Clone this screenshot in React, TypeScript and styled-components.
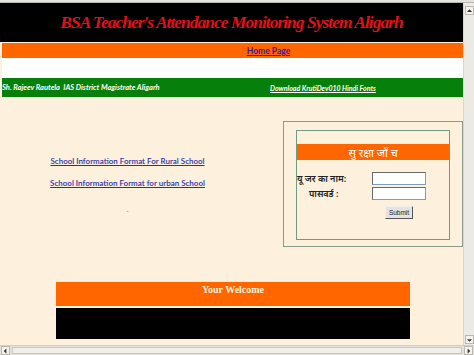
import styled, { createGlobalStyle } from "styled-components";

const GlobalStyle = createGlobalStyle`
  html, body {
    margin: 0;
    padding: 0;
    width: 474px;
    height: 355px;
    overflow: hidden;
    background: #fdf0dc;
  }
`;

const Window = styled.div`
  display: grid;
  grid-template-columns: 463px 11px;
  grid-template-rows: 3px 342px 10px;
  width: 474px;
  height: 355px;
`;

const TopStrip = styled.div`
  grid-column: 1 / 3;
  background: #e4e2dc;
  border-bottom: 1px solid #b8b6b0;
`;

const Page = styled.div`
  background: #fdf0dc;
  overflow: hidden;
  display: flex;
  flex-direction: column;
`;

const Banner = styled.div`
  height: 39px;
  background: #000;
  display: flex;
  align-items: center;
  justify-content: center;
`;

const Title = styled.h1`
  margin: 0;
  font-family: "Liberation Serif", "Times New Roman", serif;
  font-style: italic;
  font-weight: bold;
  font-size: 17.5px;
  color: #e0111b;
  letter-spacing: -1px;
`;

const NavBar = styled.div`
  margin: 1px 0 0 2px;
  height: 15px;
  background: #ff6600;
  display: flex;
  align-items: center;
  justify-content: center;
  padding-left: 72px;
`;

const NavLink = styled.a`
  font-family: Lato, "Liberation Sans", sans-serif;
  font-weight: bold;
  font-size: 8.5px;
  color: #4a10a8;
  text-decoration: underline;
`;

const WhiteGap = styled.div`
  margin-left: 2px;
  height: 20px;
  background: #fff;
`;

const GreenBar = styled.div`
  margin-left: 2px;
  height: 19px;
  background: #06800a;
  display: flex;
  align-items: center;
`;

const GreenText = styled.span<{ $width: number }>`
  width: ${p => p.$width}px;
  font-family: Lato, "Liberation Sans", sans-serif;
  font-style: italic;
  font-weight: bold;
  font-size: 7.5px;
  color: #fff;
  white-space: pre;
`;

const GreenLink = styled.a`
  font-family: Lato, "Liberation Sans", sans-serif;
  font-style: italic;
  font-weight: bold;
  font-size: 7px;
  color: #fff;
  text-decoration: underline;
`;

const Middle = styled.div`
  display: flex;
  padding-top: 24px;
`;

const LinkColumn = styled.div`
  width: 255px;
  display: flex;
  flex-direction: column;
  align-items: center;
  padding-top: 35px;
  gap: 12px;
`;

const InfoLink = styled.a`
  font-family: Lato, "Liberation Sans", sans-serif;
  font-size: 8px;
  font-weight: 600;
  color: #2e2ea8;
  text-decoration: underline;
`;

const Dash = styled.span`
  font-family: "Liberation Sans", sans-serif;
  font-size: 6px;
  color: #555;
  margin-top: 8px;
`;

const LoginOuter = styled.div`
  margin-left: 28px;
  width: 180px;
  height: 126px;
  border: 1px solid #8a9a88;
  box-sizing: border-box;
  padding: 8px 12px 0 12px;
`;

const LoginInner = styled.div`
  height: 110px;
  border: 1px solid #6f9a86;
  box-sizing: border-box;
  padding-top: 13px;
  display: flex;
  flex-direction: column;
`;

const LoginHead = styled.div`
  height: 16px;
  background: #ff6600;
  color: #fff;
  font-family: "Noto Sans", "DejaVu Sans", sans-serif;
  font-size: 11px;
  display: flex;
  align-items: center;
  justify-content: center;
  white-space: pre;
`;

const FieldGrid = styled.div`
  display: grid;
  grid-template-columns: 75px 54px;
  row-gap: 2px;
  margin-top: 12px;
  align-items: center;
`;

const Label = styled.span<{ $indent?: number }>`
  font-family: "Noto Sans", "DejaVu Sans", sans-serif;
  font-size: 9px;
  font-weight: 600;
  color: #222;
  padding-left: ${p => p.$indent ?? 0}px;
  white-space: pre;
`;

const Input = styled.input`
  width: 54px;
  height: 13px;
  box-sizing: border-box;
  border: 1px solid #7f9db9;
  border-top-color: #6a6a6a;
  border-left-color: #6a6a6a;
  background: #fff;
  padding: 0;
`;

const SubmitButton = styled.button`
  grid-column: 2;
  justify-self: start;
  margin: 4px 0 0 13px;
  width: 28px;
  height: 13px;
  padding: 0;
  font-family: "Liberation Sans", sans-serif;
  font-size: 6.5px;
  color: #222;
  background: #e6e3dc;
  border: 1px solid #555;
  border-top-color: #eee;
  border-left-color: #eee;
`;

const Welcome = styled.div`
  margin: 35px 0 0 56px;
  width: 354px;
`;

const WelcomeHead = styled.div`
  height: 24px;
  background: #ff6600;
  color: #fdf0dc;
  font-family: "Liberation Serif", "Times New Roman", serif;
  font-weight: bold;
  font-size: 10px;
  text-align: center;
  padding-top: 2px;
  box-sizing: border-box;
`;

const WelcomeBody = styled.div`
  margin-top: 2px;
  height: 31px;
  background: #000;
`;

const VScroll = styled.div`
  background: #eceae4;
  border-left: 1px solid #d8d6d0;
  display: flex;
  flex-direction: column;
  justify-content: space-between;
  align-items: center;
  padding: 3px 0 1px;
`;

const ScrollArrow = styled.div`
  width: 9px;
  height: 9px;
  background: #f4f3ef;
  border: 1px solid #b9b7b0;
  box-sizing: border-box;
  display: flex;
  align-items: center;
  justify-content: center;
`;

const HScroll = styled.div`
  grid-column: 1 / 3;
  background: #e3e1da;
  border-top: 1px solid #cfcdc6;
  display: flex;
  align-items: center;
  gap: 2px;
  padding: 0 1px;
`;

const HThumb = styled.div`
  flex: 1;
  height: 7px;
  background: #f0efea;
  border: 1px solid #c9c7c0;
  box-sizing: border-box;
`;

const Arrow = ({ dir }: { dir: "up" | "down" | "left" | "right" }) => {
  const pts = {
    up: "1,5 4,2 7,5",
    down: "1,3 4,6 7,3",
    left: "5,1 2,4 5,7",
    right: "3,1 6,4 3,7",
  }[dir];
  return (
    <svg width="8" height="8" viewBox="0 0 8 8">
      <polygon points={pts} fill="#333" />
    </svg>
  );
};

const App = () => (
  <>
    <GlobalStyle />
    <Window>
      <TopStrip />
      <Page>
        <Banner>
          <Title>BSA Teacher's Attendance Monitoring System Aligarh</Title>
        </Banner>
        <NavBar>
          <NavLink href="#">Home Page</NavLink>
        </NavBar>
        <WhiteGap />
        <GreenBar>
          <GreenText $width={268}>Sh. Rajeev Rautela  IAS District Magistrate Aligarh</GreenText>
          <GreenLink href="#">Download KrutiDev010 Hindi Fonts</GreenLink>
        </GreenBar>
        <Middle>
          <LinkColumn>
            <InfoLink href="#">School Information Format For Rural School</InfoLink>
            <InfoLink href="#">School Information Format for urban School</InfoLink>
            <Dash>-</Dash>
          </LinkColumn>
          <LoginOuter>
            <LoginInner>
              <LoginHead>सु रक्षा जाँ च</LoginHead>
              <FieldGrid>
                <Label>यू जर का नाम:</Label>
                <Input />
                <Label $indent={12}>पासवर्ड :</Label>
                <Input type="password" />
                <SubmitButton>Submit</SubmitButton>
              </FieldGrid>
            </LoginInner>
          </LoginOuter>
        </Middle>
        <Welcome>
          <WelcomeHead>Your Welcome</WelcomeHead>
          <WelcomeBody />
        </Welcome>
      </Page>
      <VScroll>
        <ScrollArrow>
          <Arrow dir="up" />
        </ScrollArrow>
        <ScrollArrow>
          <Arrow dir="down" />
        </ScrollArrow>
      </VScroll>
      <HScroll>
        <ScrollArrow>
          <Arrow dir="left" />
        </ScrollArrow>
        <HThumb />
        <ScrollArrow>
          <Arrow dir="right" />
        </ScrollArrow>
      </HScroll>
    </Window>
  </>
);

export default App;
